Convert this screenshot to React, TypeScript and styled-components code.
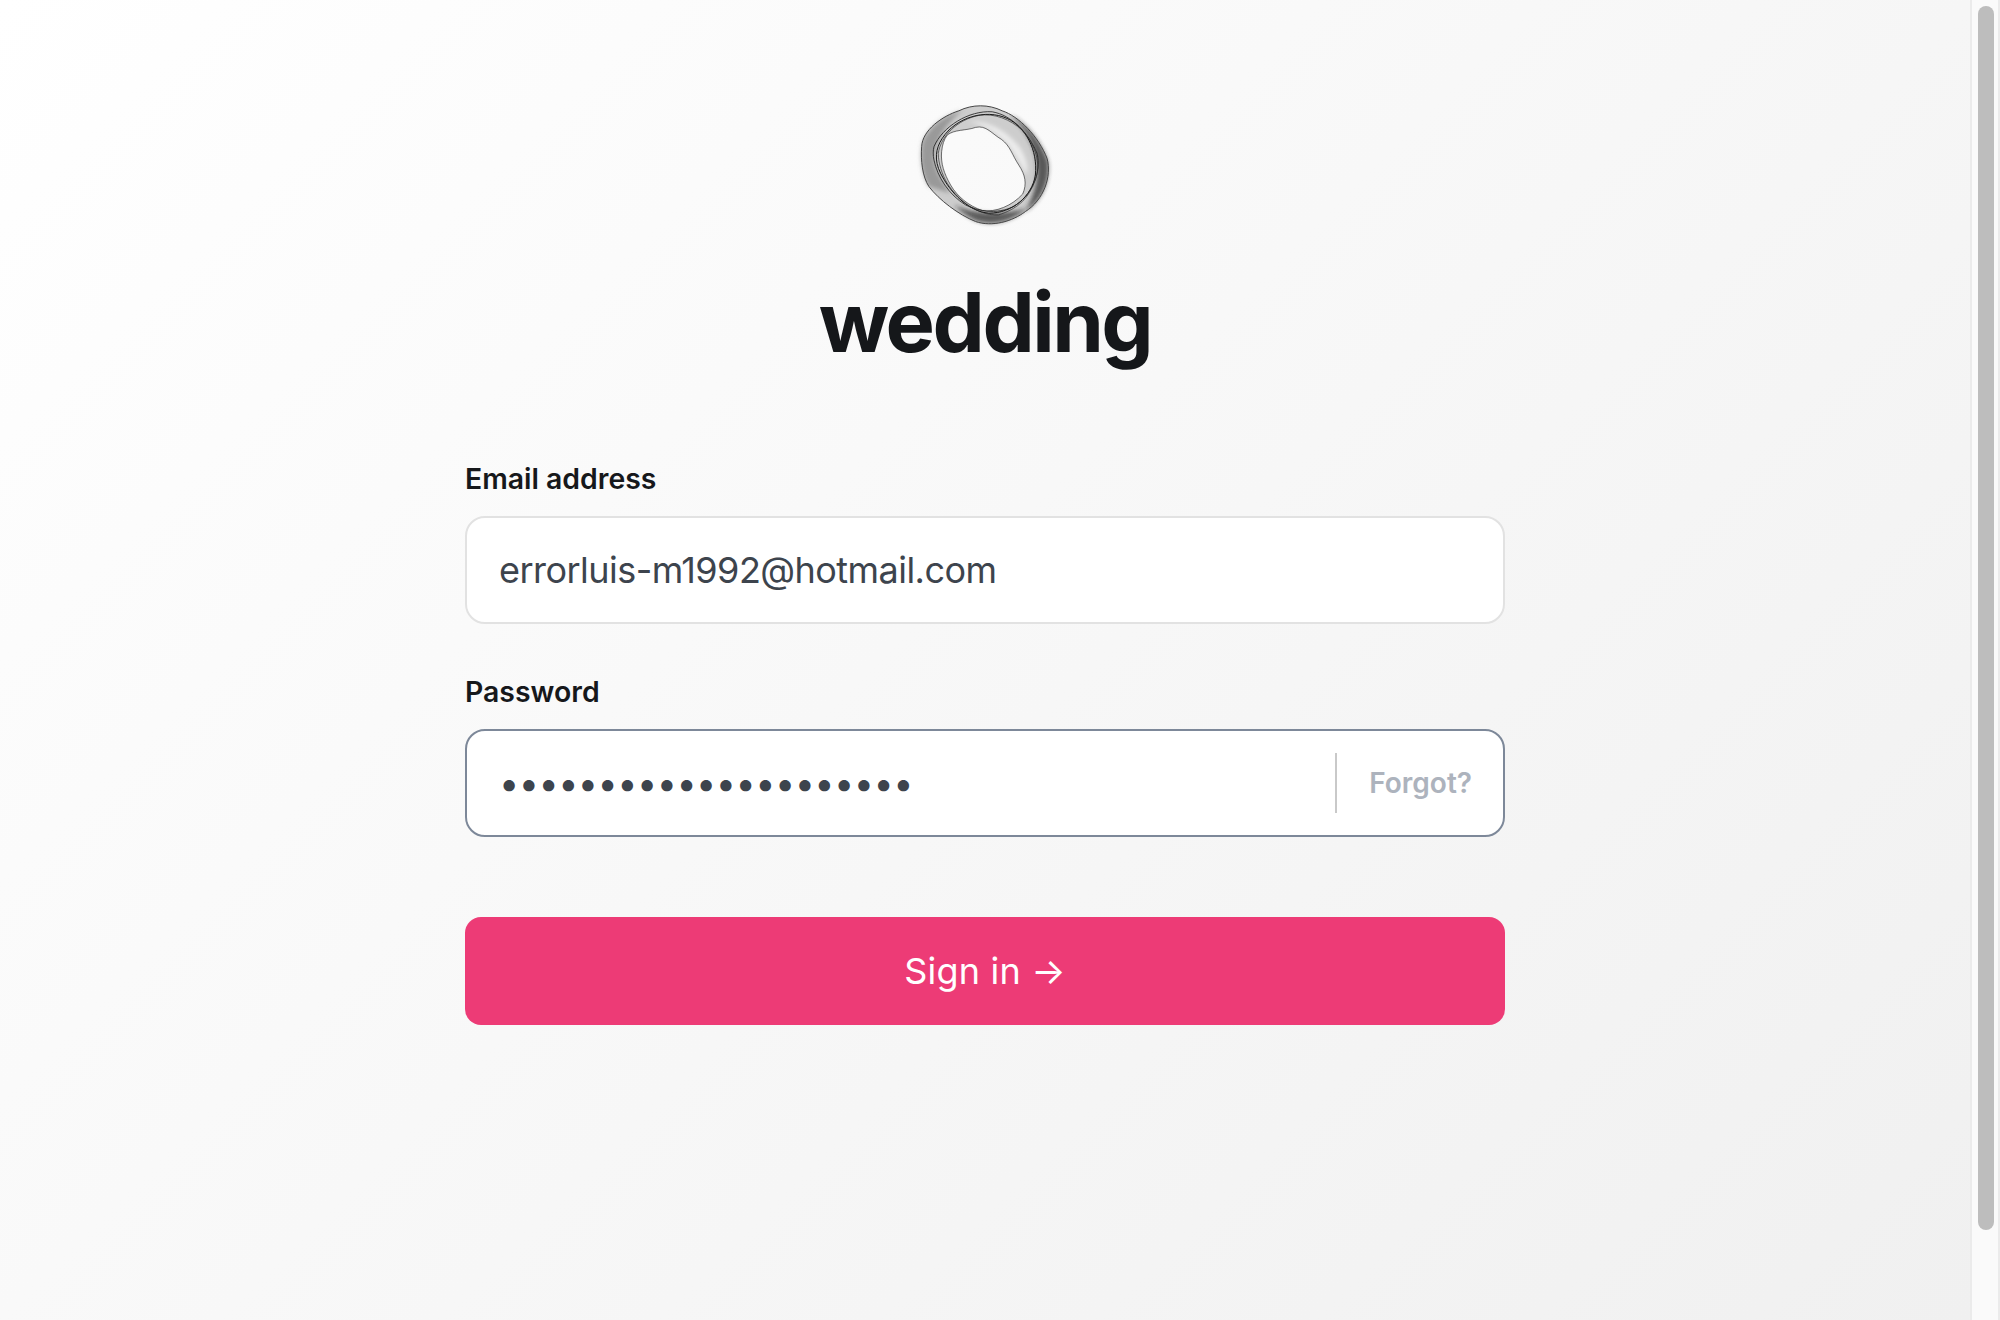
import * as React from "react";
import styled, { createGlobalStyle } from "styled-components";

const GlobalStyle = createGlobalStyle`
  html, body {
    margin: 0;
    padding: 0;
    height: 100%;
  }
  body {
    font-family: Inter, "Liberation Sans", sans-serif;
    overflow: hidden;
  }
`;

const Shell = styled.div`
  height: 1320px;
  display: flex;
  overflow: hidden;
`;

const Page = styled.main`
  flex: 1;
  min-width: 0;
  box-sizing: border-box;
  padding-top: 100px;
  display: flex;
  flex-direction: column;
  align-items: center;
  background: linear-gradient(135deg, #ffffff 0%, #f0f0f0 100%);
`;

const ScrollRail = styled.div`
  width: 30px;
  flex: none;
  box-sizing: border-box;
  padding: 6px 4px 0 6px;
  background: #fafafa;
  border-left: 2px solid #ebebeb;
  border-right: 2px solid #ebebeb;
`;

const ScrollThumb = styled.div`
  height: 1224px;
  border-radius: 8px;
  background: #bdbdbd;
`;

const LogoMark = styled.svg`
  width: 143px;
  height: 130px;
  display: block;
`;

const Title = styled.h1`
  margin: 41px 0 0;
  font-size: 83px;
  line-height: 102px;
  font-weight: 700;
  letter-spacing: -2.5px;
  color: #15171a;
`;

const Form = styled.form`
  width: 1040px;
  margin-top: 89px;
  display: flex;
  flex-direction: column;
`;

const Field = styled.div`
  display: flex;
  flex-direction: column;
  gap: 20px;
  margin-bottom: 51px;
`;

const Label = styled.label`
  font-size: 28.4px;
  line-height: 34px;
  font-weight: 600;
  color: #16181b;
`;

const InputBox = styled.div<{ $focused?: boolean }>`
  height: 108px;
  box-sizing: border-box;
  display: flex;
  align-items: center;
  background: #fff;
  border: 2px solid ${(p) => (p.$focused ? "#7d8899" : "#e2e2e2")};
  border-radius: 20px;
  padding: 0 32px;
`;

const Input = styled.input`
  flex: 1;
  min-width: 0;
  border: 0;
  outline: 0;
  padding: 0;
  background: transparent;
  font-family: inherit;
  font-size: 36px;
  letter-spacing: -0.54px;
  color: #3d444d;
`;

const Forgot = styled.a`
  height: 60px;
  display: flex;
  align-items: center;
  border-left: 2px solid #c9c9c9;
  padding-left: 32px;
  margin-right: -1px;
  font-size: 28px;
  font-weight: 600;
  color: #adb3bd;
`;

const SubmitButton = styled.button`
  height: 108px;
  margin-top: 29px;
  border: 0;
  border-radius: 16px;
  background: #ed3b76;
  color: #fff;
  font-family: inherit;
  font-size: 36px;
  font-weight: 400;
  letter-spacing: 0.2px;
`;

const HOLE =
  "M205 165C225 148 262 152 290 142C322 134 340 162 368 178C395 198 400 225 420 255C440 285 445 312 432 342C400 378 350 398 310 392C270 378 235 350 215 315C195 280 185 250 188 215C190 195 195 178 205 165Z";
const OUTER =
  "M128 200C130 150 190 108 240 92C280 72 330 72 370 92C420 108 480 170 505 235C520 290 495 360 440 395C400 425 340 442 290 425C240 405 180 360 150 320C130 290 125 240 128 200Z";

const Logo = () => (
  <LogoMark viewBox="105 60 430 390" aria-hidden="true">
    <defs>
      <filter id="soft" x="-5%" y="-5%" width="110%" height="110%">
        <feGaussianBlur stdDeviation="1.4" />
      </filter>
      <filter id="softer" x="-10%" y="-10%" width="120%" height="120%">
        <feGaussianBlur stdDeviation="6" />
      </filter>
    </defs>
    <g filter="url(#soft)">
      <path fillRule="evenodd" fill="#cdcdcd" d={`${OUTER}${HOLE}`} />
    </g>
    <g filter="url(#softer)">
      <path fill="#6f6f6f" fillOpacity="0.55" d="M150 320C125 280 120 210 135 175C165 125 205 105 250 90C205 130 170 175 165 235C170 270 185 300 215 340Z" />
      <path fill="#333" fillOpacity="0.75" d="M395 105C450 135 490 190 508 245C515 305 490 360 440 395C465 345 485 295 470 225C455 170 425 135 395 105Z" />
      <path fill="#262626" fillOpacity="0.7" d="M445 385C400 425 340 442 285 420C260 405 240 390 225 375C280 400 360 410 445 385Z" />
      <path fill="#ececec" d="M270 125C320 118 385 150 425 205C445 240 450 265 442 285C425 250 405 215 385 190C350 160 320 135 270 125Z" />
    </g>
    <g filter="url(#soft)" fill="none">
      <path stroke="#444" strokeWidth="3" d={OUTER} />
      <path stroke="#2a2a2a" strokeWidth="2.5" strokeOpacity="0.8" d={HOLE} />
      <path stroke="#141414" strokeWidth="3" d="M190 175C230 112 320 85 385 115C440 140 478 210 470 285C460 350 400 400 330 400C270 395 215 340 185 280C165 240 170 205 190 175Z" />
      <path stroke="#1f1f1f" strokeWidth="2.5" d="M165 200C190 140 270 90 340 95C400 105 450 160 475 220C490 280 455 340 425 365C380 405 310 400 260 375C210 345 175 290 165 240C162 225 162 212 165 200Z" />
      <path stroke="#2b2b2b" strokeWidth="2.5" strokeOpacity="0.8" d="M178 220C185 170 235 118 300 106C345 98 395 118 430 150C470 195 488 250 470 300C450 355 420 385 360 405C300 408 240 365 205 310C190 285 178 250 178 220Z" />
    </g>
  </LogoMark>
);

export default function App() {
  return (
    <Shell>
      <GlobalStyle />
      <Page>
        <Logo />
        <Title>wedding</Title>
        <Form onSubmit={(e) => e.preventDefault()}>
          <Field>
            <Label htmlFor="email">Email address</Label>
            <InputBox>
              <Input id="email" type="email" defaultValue="errorluis-m1992@hotmail.com" />
            </InputBox>
          </Field>
          <Field>
            <Label htmlFor="password">Password</Label>
            <InputBox $focused>
              <Input id="password" type="password" defaultValue="errorluism1992wedding" />
              <Forgot>Forgot?</Forgot>
            </InputBox>
          </Field>
          <SubmitButton type="submit">Sign in →</SubmitButton>
        </Form>
      </Page>
      <ScrollRail>
        <ScrollThumb />
      </ScrollRail>
    </Shell>
  );
}
